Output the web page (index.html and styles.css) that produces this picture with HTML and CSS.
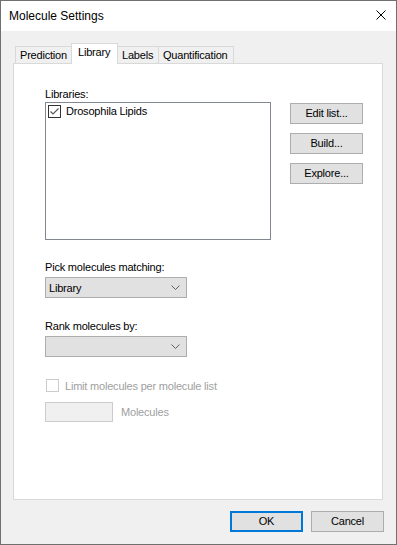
FILE: index.html
```html
<!DOCTYPE html>
<html lang="en">

<head>
    <meta charset="UTF-8">
    <title>Molecule Settings</title>
    <link rel="stylesheet" href="styles.css">
</head>

<body>
    <div class="window">
        <div class="titlebar">
            <span class="title">Molecule Settings</span>
            <svg class="close" width="10" height="10" viewBox="0 0 10 10">
                <path d="M0.5 0.5 L9.5 9.5 M9.5 0.5 L0.5 9.5" stroke="#000" stroke-width="1" />
            </svg>
        </div>

        <div class="client">
            <div class="tabs">
                <div class="tab first">Prediction</div>
                <div class="tab selected">Library</div>
                <div class="tab">Labels</div>
                <div class="tab last">Quantification</div>
            </div>

            <div class="panel">
                <div class="label libs-label">Libraries:</div>
                <div class="libs-row">
                    <div class="listbox">
                        <div class="list-item">
                            <svg class="check" width="13" height="13" viewBox="0 0 13 13">
                                <rect x="0.5" y="0.5" width="12" height="12" fill="#fff" stroke="#333" />
                                <path d="M2.5 6.5 L5 9 L10.5 3.5" fill="none" stroke="#5a5a5a" stroke-width="1.2" />
                            </svg>
                            <span>Drosophila Lipids</span>
                        </div>
                    </div>
                    <div class="side-buttons">
                        <div class="button">Edit list...</div>
                        <div class="button">Build...</div>
                        <div class="button">Explore...</div>
                    </div>
                </div>

                <div class="label pick-label">Pick molecules matching:</div>
                <div class="combo">
                    <span>Library</span>
                    <svg class="chevron" width="9" height="5" viewBox="0 0 9 5">
                        <path d="M0.5 0.5 L4.5 4.5 L8.5 0.5" fill="none" stroke="#606060" />
                    </svg>
                </div>

                <div class="label rank-label">Rank molecules by:</div>
                <div class="combo">
                    <span></span>
                    <svg class="chevron" width="9" height="5" viewBox="0 0 9 5">
                        <path d="M0.5 0.5 L4.5 4.5 L8.5 0.5" fill="none" stroke="#606060" />
                    </svg>
                </div>

                <div class="limit-row">
                    <span class="box disabled-box"></span>
                    <span class="disabled">Limit molecules per molecule list</span>
                </div>
                <div class="count-row">
                    <span class="textbox"></span>
                    <span class="disabled">Molecules</span>
                </div>
            </div>

            <div class="footer">
                <div class="button default">OK</div>
                <div class="button">Cancel</div>
            </div>
        </div>
    </div>
</body>

</html>
```

FILE: styles.css
```css
html,
body {
    margin: 0;
    padding: 0;
    background: #f0f0f0;
}

body {
    font: 11px "Liberation Sans", Arial, sans-serif;
    letter-spacing: -0.2px;
    color: #000;
}

.window {
    box-sizing: border-box;
    width: 397px;
    height: 545px;
    border: 1px solid #707070;
    display: flex;
    flex-direction: column;
    background: #f0f0f0;
}

.titlebar {
    height: 30px;
    background: #fff;
    display: flex;
    align-items: center;
    justify-content: space-between;
    padding: 0 10px 0 8px;
}

.title {
    font-size: 12px;
    letter-spacing: 0;
}

.close {
    margin-top: -2px;
}

.client {
    flex: auto;
    display: flex;
    flex-direction: column;
    padding: 12px 13px 0 12px;
}

.tabs {
    display: flex;
    align-items: flex-end;
    padding-left: 2px;
    position: relative;
    z-index: 1;
}

.tab {
    box-sizing: border-box;
    height: 17px;
    padding: 0 4px;
    line-height: 16px;
    border: 1px solid #d9d9d9;
    border-bottom: none;
    border-right: none;
    background: #f0f0f0;
}

.tab.last {
    width: 76px;
    border-right: 1px solid #d9d9d9;
}

.tab.first {
    width: 57px;
}

.tab.selected {
    box-sizing: border-box;
    width: 47px;
    height: 21px;
    margin: 0 -1px -1px -1px;
    background: #fff;
    border-right: 1px solid #d9d9d9;
    line-height: 17px;
    position: relative;
    z-index: 2;
    padding: 0 6px;
}

.tab.selected + .tab {
    border-left: none;
    width: 41px;
    padding-left: 5px;
}

.panel {
    box-sizing: border-box;
    height: 437px;
    border: 1px solid #d9d9d9;
    background: #fff;
    padding: 0 0 0 31px;
    display: flex;
    flex-direction: column;
    align-items: flex-start;
}

.label {
    line-height: 13px;
}

.libs-label {
    margin-top: 24px;
}

.libs-row {
    display: flex;
    margin-top: 1px;
}

.listbox {
    box-sizing: border-box;
    width: 226px;
    height: 138px;
    border: 1px solid #828790;
    padding: 0 2px;
}

.list-item {
    display: flex;
    align-items: center;
    gap: 5px;
    height: 16px;
}

.check {
    display: block;
}

.side-buttons {
    display: flex;
    flex-direction: column;
    gap: 9px;
    margin-left: 19px;
    margin-top: 1px;
}

.button {
    box-sizing: border-box;
    width: 73px;
    height: 21px;
    border: 1px solid #adadad;
    background: #e1e1e1;
    text-align: center;
    line-height: 19px;
}

.button.default {
    border: 2px solid #0078d7;
    line-height: 17px;
}

.pick-label {
    margin-top: 21px;
}

.rank-label {
    margin-top: 22px;
}

.combo {
    box-sizing: border-box;
    width: 142px;
    height: 21px;
    margin-top: 3px;
    border: 1px solid #adadad;
    background: #e1e1e1;
    display: flex;
    align-items: center;
    justify-content: space-between;
    padding: 0 6px 0 3px;
}

.chevron {
    display: block;
}

.limit-row {
    display: flex;
    align-items: center;
    gap: 6px;
    margin-top: 22px;
    margin-left: 1px;
}

.box {
    box-sizing: border-box;
    width: 13px;
    height: 13px;
    border: 1px solid #cccccc;
    background: #fff;
}

.disabled {
    color: #a0a0a0;
}

.count-row {
    display: flex;
    align-items: center;
    gap: 8px;
    margin-top: 10px;
}

.textbox {
    box-sizing: border-box;
    width: 68px;
    height: 20px;
    border: 1px solid #cccccc;
    background: #f0f0f0;
}

.footer {
    display: flex;
    justify-content: flex-end;
    gap: 8px;
    margin-top: 11px;
    margin-right: -1px;
}
```
